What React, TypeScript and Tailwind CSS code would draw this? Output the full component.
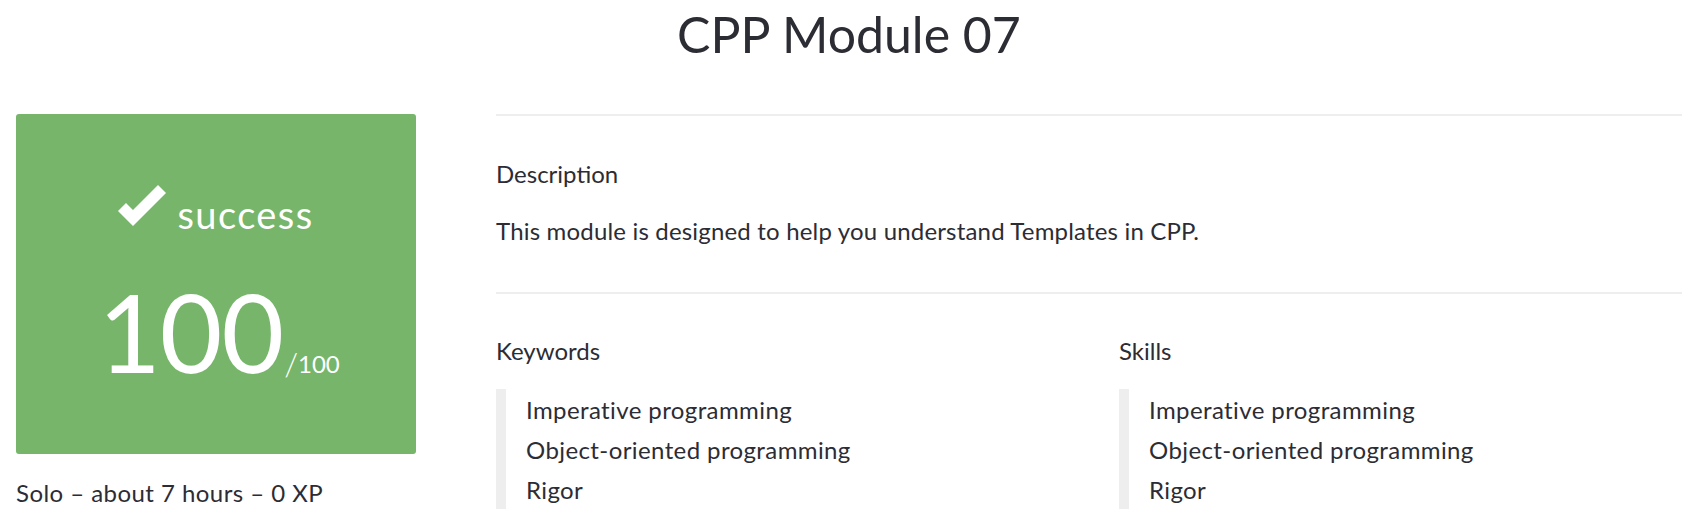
import React from 'react';

const items = ['Imperative programming', 'Object-oriented programming', 'Rigor'];

function TagList({ title, className }: { title: string; className: string }) {
  return (
    <div className={className}>
      <h4 className="text-[24px] leading-[34px] font-normal">{title}</h4>
      <ul className="mt-[21px] border-l-[10px] border-[#eeeeee] pt-[1px] pl-[20px] h-[120px]">
        {items.map((item) => (
          <li key={item} className="text-[24px] leading-[40px] tracking-[0.4px]">
            {item}
          </li>
        ))}
      </ul>
    </div>
  );
}

function CheckIcon() {
  return (
    <svg width="48" height="41" viewBox="0 0 48 41" className="mr-[11px] mb-[7px]">
      <polygon points="40,0 48,8 15,41 0,26 8,18 15,25" fill="#ffffff" />
    </svg>
  );
}

export default function App() {
  return (
    <div className="w-[1708px] h-[528px] overflow-hidden bg-white text-[#2c2c34] font-['Lato',sans-serif]">
      <h1 className="text-center text-[50px] leading-[68px] font-normal pr-[10px]">CPP Module 07</h1>

      <div className="flex mt-[46px] pl-[16px] pr-[26px]">
        {/* Score */}
        <div className="w-[400px] shrink-0">
          <div className="h-[340px] rounded-[3px] bg-[#76b56a] text-white flex flex-col items-center">
            <div className="flex items-end mt-[77px] h-[42px]">
              <CheckIcon />
              <span className="text-[38px] leading-[38px] tracking-[1.4px]">success</span>
            </div>
            <div className="flex items-baseline mt-[33px] pl-[6px]">
              <span className="text-[108px] leading-[130px] font-normal tracking-[-1px]">100</span>
              <span className="text-[32px] leading-none ml-[1px] font-light translate-y-[3px]">/</span>
              <span className="text-[24px] font-normal">100</span>
            </div>
          </div>
          <p className="text-[24px] leading-[34px] mt-[22px] tracking-[0.45px]">Solo – about 7 hours – 0 XP</p>
        </div>

        {/* Details */}
        <div className="flex-1 ml-[80px]">
          <div className="border-t-2 border-[#eeeeee] pt-[41px] h-[178px]">
            <h4 className="text-[24px] leading-[34px] font-normal">Description</h4>
            <p className="text-[24px] leading-[34px] mt-[23px] tracking-[0.18px]">
              This module is designed to help you understand Templates in CPP.
            </p>
          </div>
          <div className="border-t-2 border-[#eeeeee] pt-[40px] flex">
            <TagList title="Keywords" className="w-[623px] shrink-0" />
            <TagList title="Skills" className="flex-1" />
          </div>
        </div>
      </div>
    </div>
  );
}
